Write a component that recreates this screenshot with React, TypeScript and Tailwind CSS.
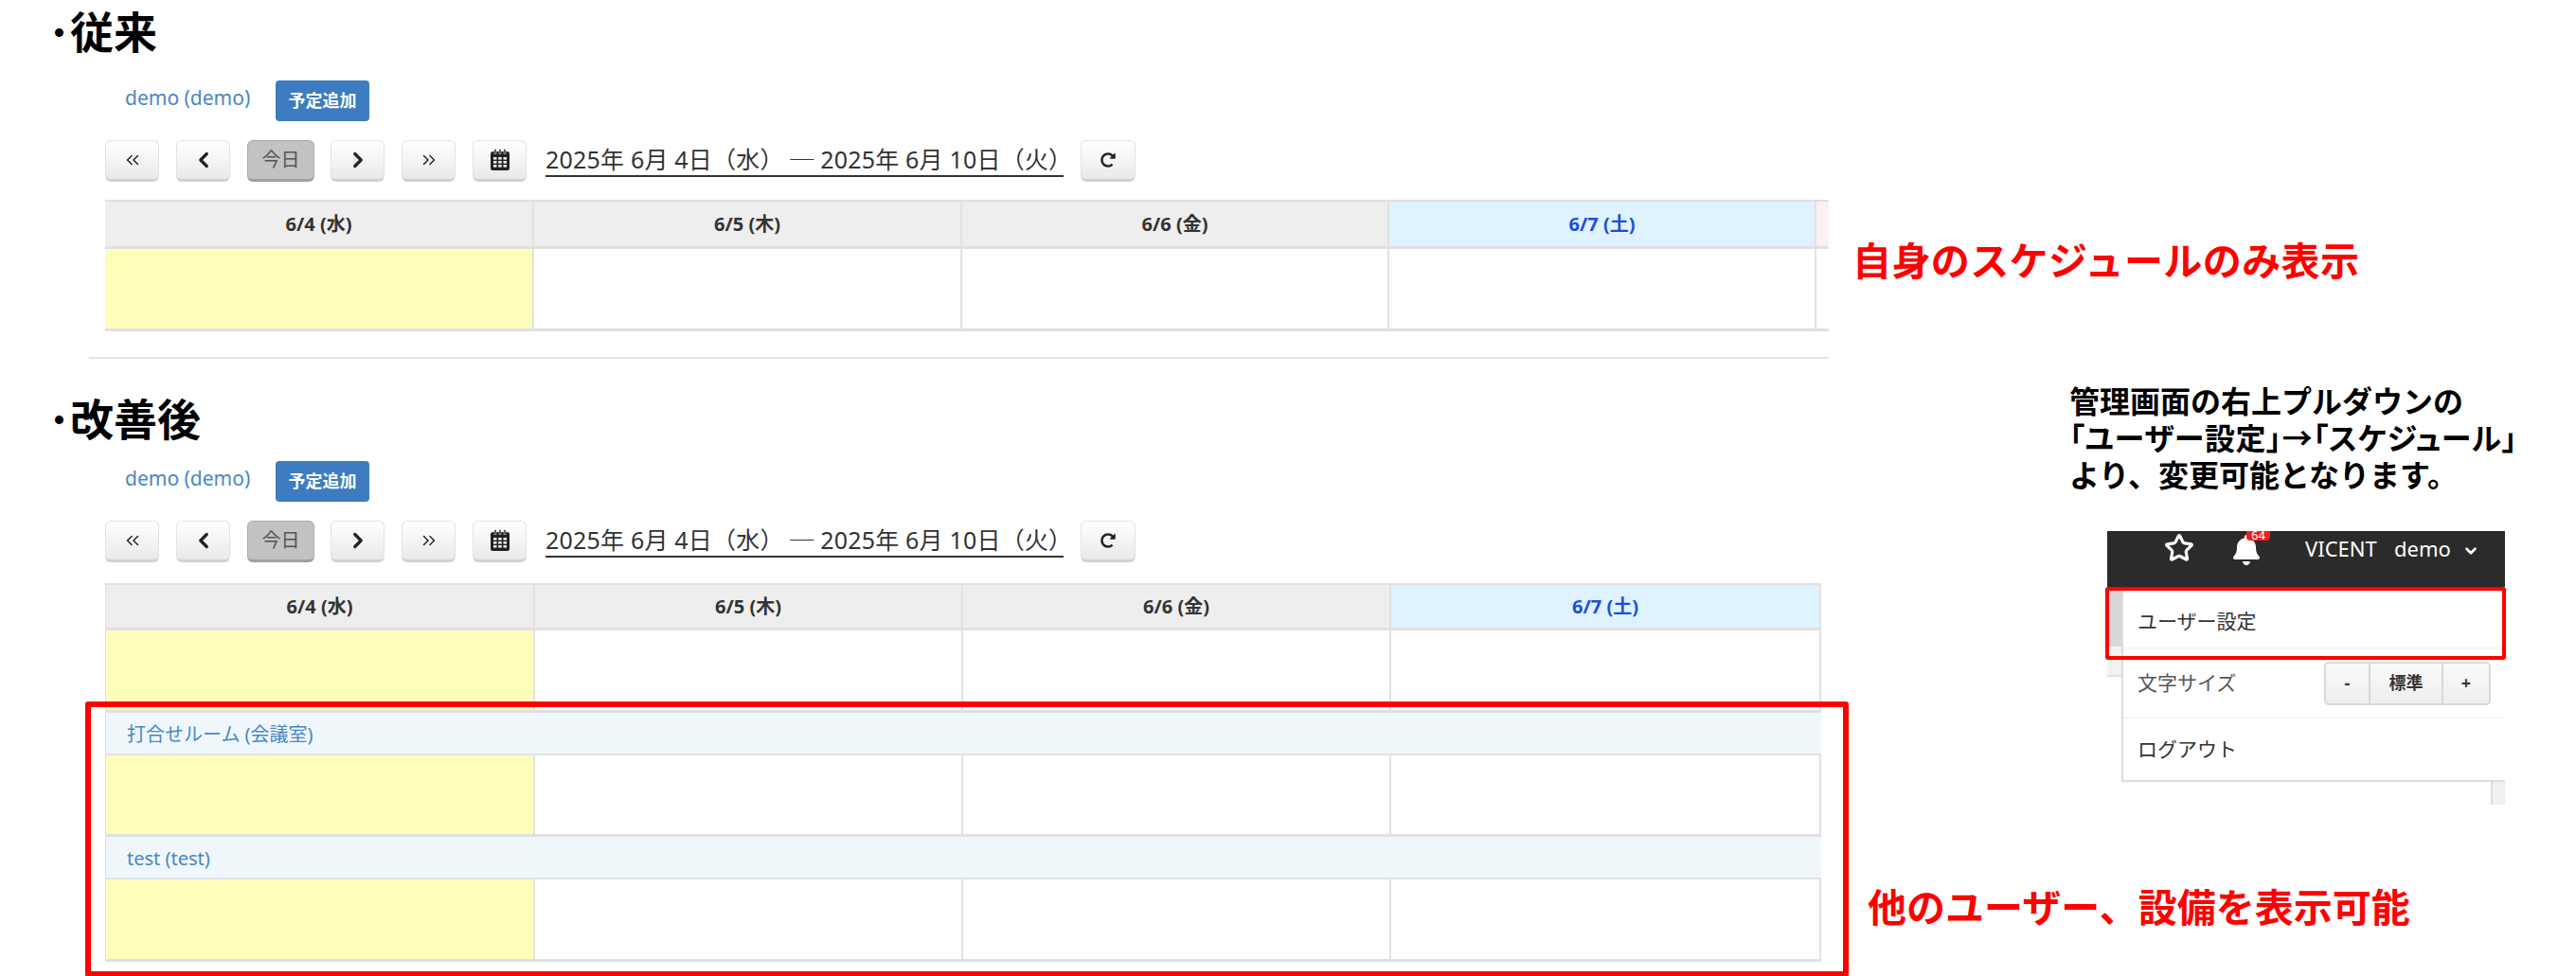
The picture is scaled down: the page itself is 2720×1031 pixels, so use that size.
import React from 'react';
import { ChevronDown, ChevronLeft, ChevronRight, ChevronsLeft, ChevronsRight, Star } from 'lucide-react';
import { FaBell, FaRedoAlt } from 'react-icons/fa';

const DAYS = [
  { label: '6/4 (水)', today: true },
  { label: '6/5 (木)' },
  { label: '6/6 (金)' },
  { label: '6/7 (土)', sat: true },
];

const navBtn =
  'h-[44px] flex items-center justify-center rounded-[6px] border border-[#e2e2e2] border-b-[3px] border-b-[#d2d2d2] bg-linear-to-b from-white to-[#e9e9e9] text-[#222]';

const CalendarIcon = () => (
  <svg width="22" height="24" viewBox="0 0 22 24" fill="#222">
    <rect x="1" y="3" width="20" height="20" rx="2.5" />
    <rect x="5" y="0.5" width="2" height="5" fill="#222" stroke="#eee" strokeWidth="0.6" />
    <rect x="10" y="0.5" width="2" height="5" fill="#222" stroke="#eee" strokeWidth="0.6" />
    <rect x="15" y="0.5" width="2" height="5" fill="#222" stroke="#eee" strokeWidth="0.6" />
    <g fill="#eee">
      <rect x="4" y="9" width="3.5" height="2.6" />
      <rect x="9.2" y="9" width="3.5" height="2.6" />
      <rect x="14.5" y="9" width="3.5" height="2.6" />
      <rect x="4" y="13" width="3.5" height="2.6" />
      <rect x="9.2" y="13" width="3.5" height="2.6" />
      <rect x="14.5" y="13" width="3.5" height="2.6" />
      <rect x="4" y="17" width="3.5" height="2.6" />
      <rect x="9.2" y="17" width="3.5" height="2.6" />
      <rect x="14.5" y="17" width="3.5" height="2.6" />
    </g>
  </svg>
);

const Toolbar = () => (
  <>
    <div className="flex items-center h-[43px] ml-[132px]">
      <span className="w-[159px] pb-[5px] text-[21px] text-[#4a86c4]">demo (demo)</span>
      <button className="w-[99px] h-[43px] rounded-[4px] bg-[#3d7cc0] text-white text-[18px] font-bold">予定追加</button>
    </div>
    <div className="flex items-center ml-[111px] mt-[20px]">
      <button className={`${navBtn} w-[57px]`}><ChevronsLeft size={22} strokeWidth={1.6} /></button>
      <button className={`${navBtn} w-[57px] ml-[18px]`}><ChevronLeft size={26} strokeWidth={3} /></button>
      <button className="w-[71px] h-[44px] ml-[18px] rounded-[6px] border border-[#aaa] border-b-[3px] border-b-[#a0a0a0] bg-[#c2c2c2] text-[#555] text-[20px]">今日</button>
      <button className={`${navBtn} w-[57px] ml-[17px]`}><ChevronRight size={26} strokeWidth={3} /></button>
      <button className={`${navBtn} w-[57px] ml-[18px]`}><ChevronsRight size={22} strokeWidth={1.6} /></button>
      <button className={`${navBtn} w-[57px] ml-[18px]`}><CalendarIcon /></button>
      <span className="ml-[20px] w-[547px] h-[34px] border-b-2 border-[#333] text-[25px] leading-[30px] text-[#333] whitespace-nowrap tracking-[0.2px]">2025年 6月 4日（水） ─ 2025年 6月 10日（火）</span>
      <button className={`${navBtn} w-[58px] ml-[18px]`}><FaRedoAlt size={16} /></button>
    </div>
  </>
);

const DayRow = ({ cols, height, header }: { cols: string; height: string; header?: boolean }) => (
  <div className={`grid ${cols} ${height} border-b-[3px] border-[#e0e0e0]`}>
    {DAYS.map((d) => (
      <div
        key={d.label}
        className={`flex items-center justify-center border-r-2 border-[#e2e2e2] text-[20px] font-bold ${
          header
            ? d.sat
              ? 'bg-[#dff2ff] text-[#1d4fd8]'
              : 'bg-[#eeeeee] text-[#333]'
            : d.today
              ? 'bg-[#fffdbb]'
              : 'bg-white'
        }`}
      >
        {header ? d.label : ''}
      </div>
    ))}
  </div>
);

const GroupRow = ({ name }: { name: string }) => (
  <div className="h-[45px] flex items-center pl-[22px] pt-[2px] bg-[#f0f7fa] border-b-2 border-[#e0e2e6] text-[20px] text-[#4a86c4]">
    {name}
  </div>
);

const Menu = () => (
  <div className="ml-[302px] w-[420px] relative">
    <div className="h-[59px] bg-[#2b2b2b] text-white text-[22px] relative">
      <Star className="absolute left-[60px] top-[2px]" size={32} strokeWidth={2.4} />
      <FaBell className="absolute left-[131px] top-[4px]" size={32} />
      <span className="absolute left-[147px] top-0 w-[25px] h-[10px] rounded-b-[4px] bg-[#f01c22] text-[13px] leading-[8px] text-center overflow-hidden">64</span>
      <span className="absolute left-[209px] top-[2px] leading-[32px]">VICENT</span>
      <span className="absolute left-[303px] top-[2px] leading-[32px]">demo</span>
      <ChevronDown className="absolute left-[375px] top-[12px]" size={18} strokeWidth={3.5} />
    </div>
    <div className="flex">
      <div className="w-[15px]">
        <div className="h-[63px] bg-[#d8d8d8]" />
        <div className="h-[32px] bg-[#f2f2f2] border-b-2 border-[#e0e0e0]" />
      </div>
      <div className="flex-1 border-l-2 border-b-2 border-[#dcdcdc] text-[21px] text-[#333]">
        <div className="h-[65px] flex items-center pl-[15px] pt-[10px] border-b border-[#eeeeee]">ユーザー設定</div>
        <div className="h-[74px] flex items-center pl-[15px] border-b border-[#eeeeee] text-[#555]">
          <span className="w-[197px]">文字サイズ</span>
          <div className="flex h-[46px] w-[176px] rounded-[5px] border-2 border-[#d8d8d8] bg-linear-to-b from-[#fafafa] to-[#eeeeee] text-[18px] font-bold text-[#333]">
            <span className="w-[47px] flex items-center justify-center border-r-2 border-[#d8d8d8]">-</span>
            <span className="w-[77px] flex items-center justify-center border-r-2 border-[#d8d8d8]">標準</span>
            <span className="flex-1 flex items-center justify-center">+</span>
          </div>
        </div>
        <div className="h-[65px] flex items-center pl-[15px]">ログアウト</div>
      </div>
    </div>
    <div className="ml-[405px] w-[15px] h-[24px] bg-[#f0f0f0] border-l-2 border-[#dcdcdc]" />
    {/* highlight over the user settings item */}
    <div className="absolute left-[-2px] top-[59px] w-[423px] h-[77px] rounded-[3px] border-[4px] border-[#ff0000]" />
  </div>
);

export default function App() {
  return (
    <div className="relative w-[2720px] h-[1031px] overflow-hidden bg-white font-['Noto_Sans','Noto_Sans_CJK_JP',sans-serif]">
      {/* 従来 */}
      <section className="h-[379px] ml-[94px] border-b-2 border-[#e4e4e4] w-[1837px] pt-[8px]">
        <div className="-ml-[94px]">
          <h2 className="h-[50px] ml-[51px] text-[46px] leading-[50px] font-bold text-black">･従来</h2>
          <div className="mt-[27px]"><Toolbar /></div>
          <div className="flex mt-[19px] w-[2720px]">
            <div className="ml-[111px] w-[1820px] border-t-2 border-[#e0e0e0] grid grid-cols-[1807px_13px]">
              <div>
                <DayRow cols="grid-cols-[453px_452px_451px_451px]" height="h-[50px]" header />
                <DayRow cols="grid-cols-[453px_452px_451px_451px]" height="h-[87px]" />
              </div>
              <div>
                <div className="h-[50px] bg-[#fff0f0] border-b-[3px] border-[#e0e0e0]" />
                <div className="h-[87px] bg-white border-b-[3px] border-[#e0e0e0]" />
              </div>
            </div>
            <p className="ml-[25px] mt-[41px] text-[41px] leading-[46px] tracking-[0.4px] font-bold text-[#ff0000] whitespace-nowrap">自身のスケジュールのみ表示</p>
          </div>
        </div>
      </section>

      {/* 改善後 */}
      <section className="flex">
        <div className="w-[1923px] pt-[38px]">
          <h2 className="h-[50px] ml-[51px] text-[46px] leading-[50px] font-bold text-black">･改善後</h2>
          <div className="mt-[20px]"><Toolbar /></div>
          <div className="relative ml-[111px] mt-[22px] w-[1812px] border-t-2 border-l border-[#e0e0e0]">
            <DayRow cols="grid-cols-[453px_452px_452px_454px]" height="h-[48px]" header />
            <DayRow cols="grid-cols-[453px_452px_452px_454px]" height="h-[87px]" />
            <GroupRow name="打合せルーム (会議室)" />
            <DayRow cols="grid-cols-[453px_452px_452px_454px]" height="h-[86px]" />
            <GroupRow name="test (test)" />
            <DayRow cols="grid-cols-[453px_452px_452px_454px]" height="h-[87px]" />
            {/* highlight around the added calendars */}
            <div className="absolute left-[-22px] top-[123px] w-[1862px] h-[291px] rounded-[3px] border-[6px] border-[#ff0000]" />
          </div>
        </div>
        <div className="flex-1">
          <div className="relative w-[797px]">
            <div className="ml-[262px] pt-[25px] h-[182px] text-[32px] leading-[39px] font-bold text-black whitespace-nowrap">
              <p>管理画面の右上プルダウンの</p>
              <p className="[font-feature-settings:'palt'] tracking-[0.6px]">「ユーザー設定」→「スケジュール」</p>
              <p>より、変更可能となります。</p>
            </div>
            <Menu />
            <p className="ml-[49px] mt-[85px] text-[41px] leading-[46px] font-bold text-[#ff0000] whitespace-nowrap">他のユーザー、設備を表示可能</p>
          </div>
        </div>
      </section>
    </div>
  );
}
